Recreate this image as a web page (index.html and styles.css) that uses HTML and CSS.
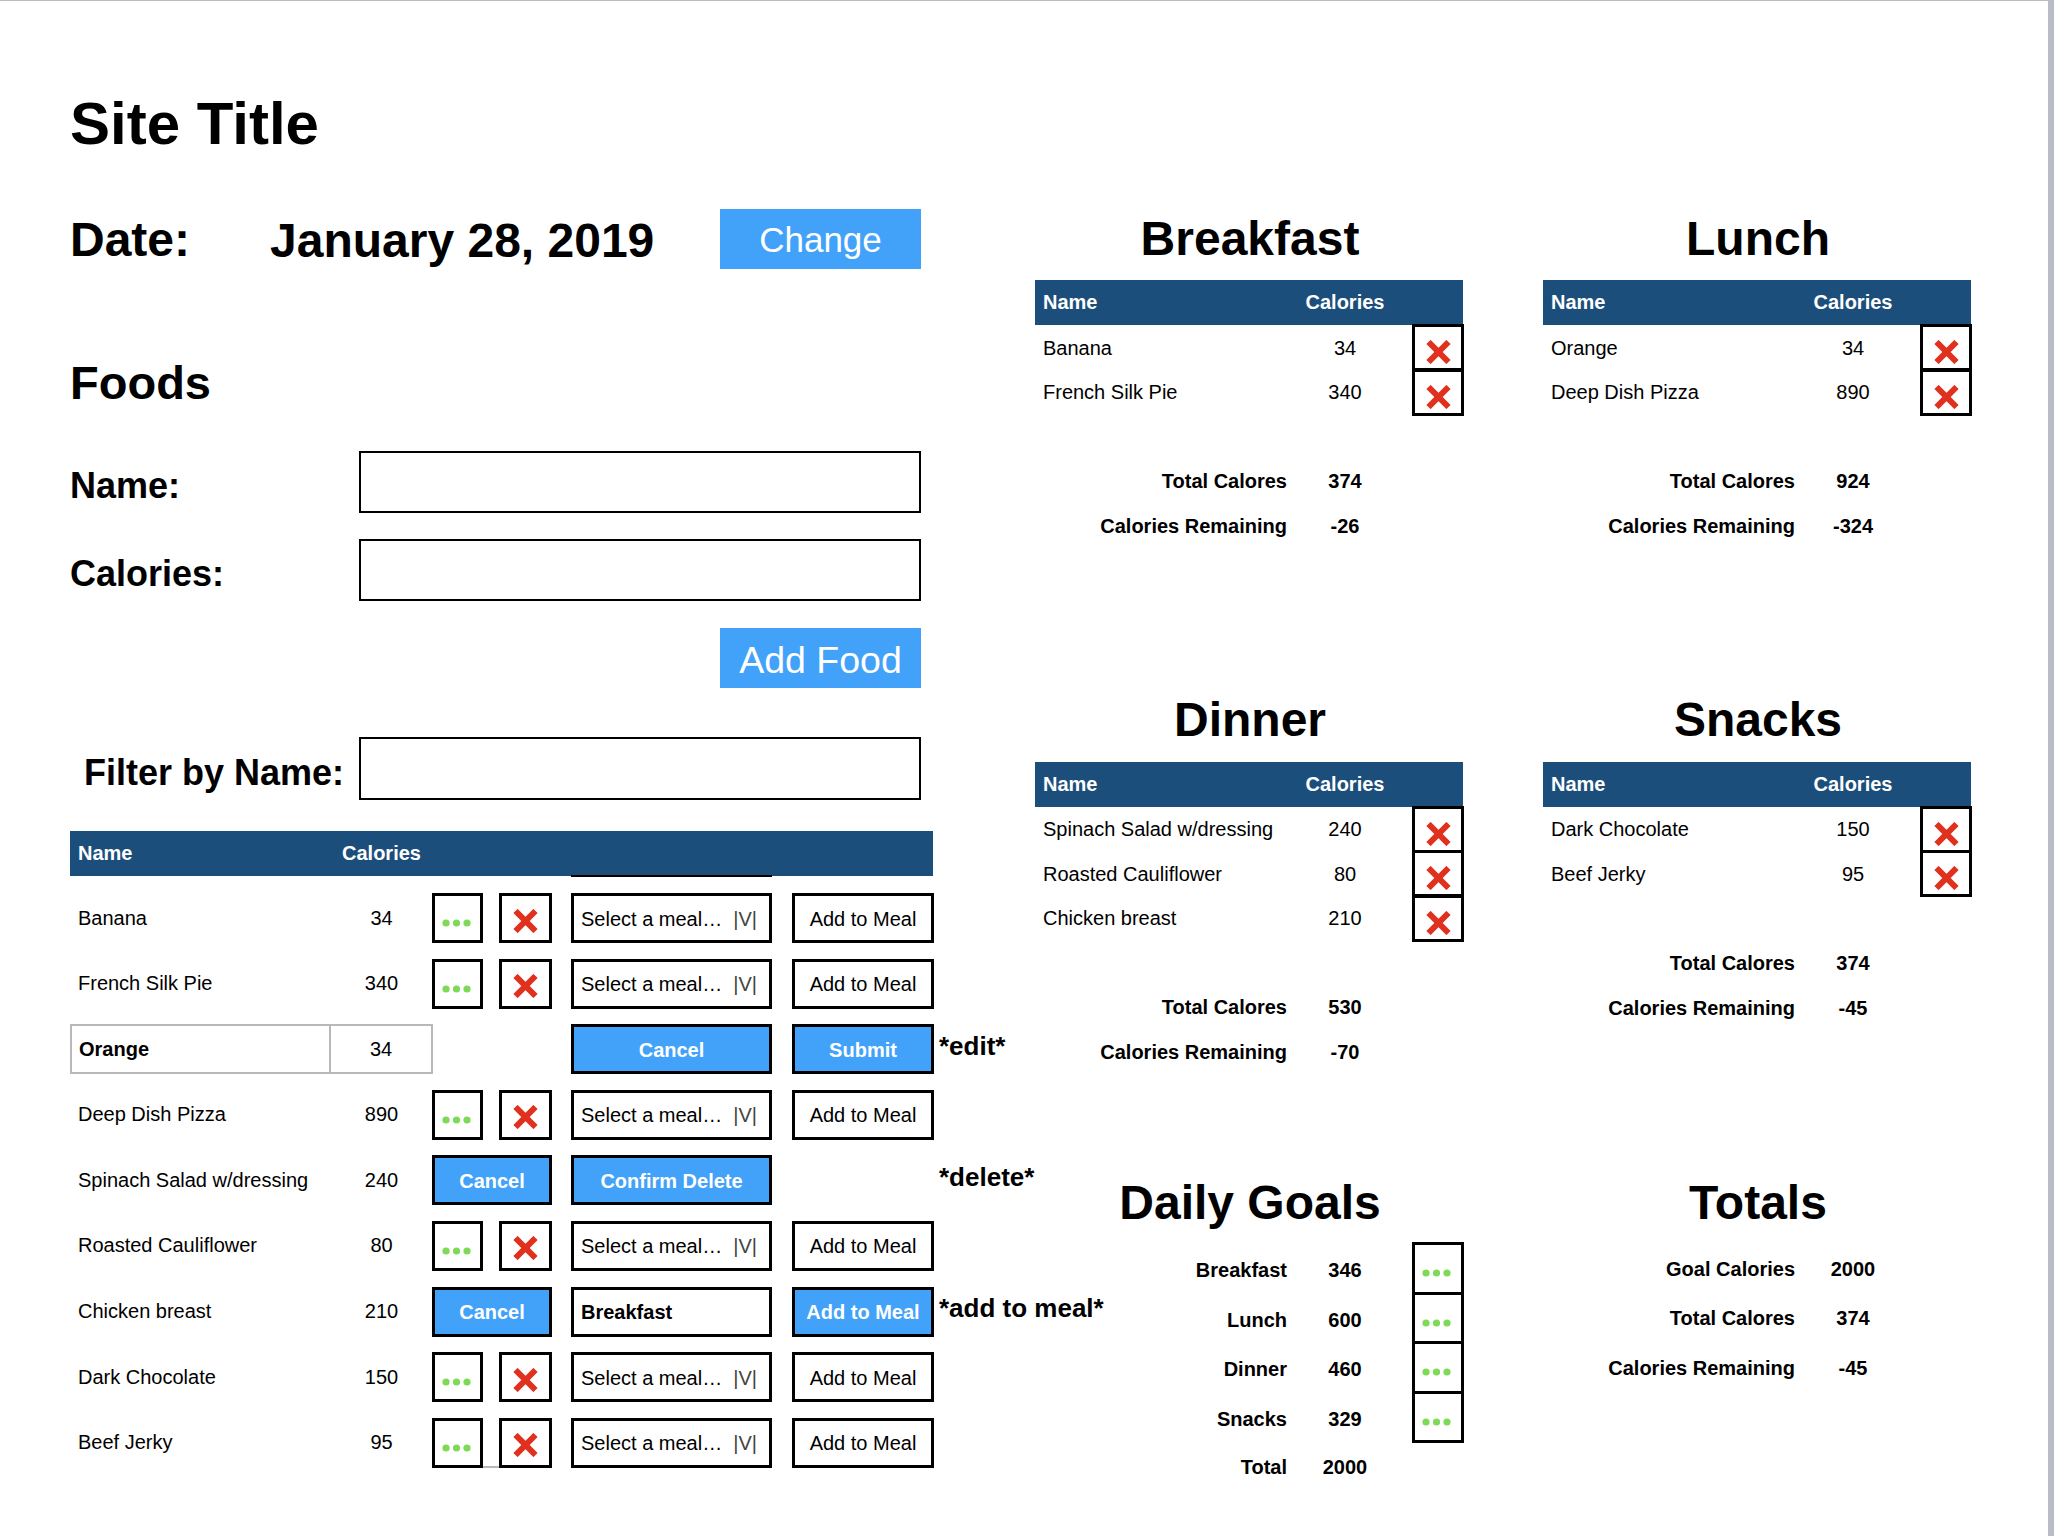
FILE: index.html
```html
<!DOCTYPE html>
<html lang="en">
<head>
  <meta charset="UTF-8">
  <title>Site Title</title>
  <link rel="stylesheet" href="styles.css">
</head>
<body>
<svg class="icon-defs" width="0" height="0" aria-hidden="true">
  <symbol id="dots" viewBox="0 0 32 8">
    <circle cx="4" cy="4" r="3.6"/>
    <circle cx="14.5" cy="4" r="3.6"/>
    <circle cx="25" cy="4" r="3.6"/>
  </symbol>
  <symbol id="cross" viewBox="0 0 25 24">
    <path d="M2.5 2 L22.5 22 M22.5 2 L2.5 22"/>
  </symbol>
</svg>
<div class="page">
  <div class="left">
    <h1>Site Title</h1>
    <div class="date-row">
      <span class="date-label">Date:</span>
      <span class="date-value">January 28, 2019</span>
      <button class="big-btn change-btn">Change</button>
    </div>
    <h2 class="foods-title">Foods</h2>
    <div class="field name-field">
      <label>Name:</label>
      <input type="text">
    </div>
    <div class="field calories-field">
      <label>Calories:</label>
      <input type="text">
    </div>
    <div class="add-row"><button class="big-btn add-btn">Add Food</button></div>
    <div class="field filter-field">
      <label>Filter by Name:</label>
      <input type="text">
    </div>

    <div class="foods-head">
      <span class="head-name">Name</span>
      <span class="cal">Calories</span>
      <span class="head-line"></span>
    </div>
    <div class="foods">
      <div class="food">
        <span class="name">Banana</span><span class="cal">34</span>
        <button class="box dots-box"><svg class="dots"><use href="#dots"/></svg></button>
        <button class="box x-box"><svg class="cross"><use href="#cross"/></svg></button>
        <div class="box select"><span>Select a meal…</span><span class="arrow">|V|</span></div>
        <button class="box add-meal">Add to Meal</button>
      </div>
      <div class="food">
        <span class="name">French Silk Pie</span><span class="cal">340</span>
        <button class="box dots-box"><svg class="dots"><use href="#dots"/></svg></button>
        <button class="box x-box"><svg class="cross"><use href="#cross"/></svg></button>
        <div class="box select"><span>Select a meal…</span><span class="arrow">|V|</span></div>
        <button class="box add-meal">Add to Meal</button>
      </div>
      <div class="food">
        <span class="name edit-name">Orange</span><span class="cal edit-cal">34</span>
        <button class="box blue select-col">Cancel</button>
        <button class="box blue add-meal">Submit</button>
        <span class="note">*edit*</span>
      </div>
      <div class="food">
        <span class="name">Deep Dish Pizza</span><span class="cal">890</span>
        <button class="box dots-box"><svg class="dots"><use href="#dots"/></svg></button>
        <button class="box x-box"><svg class="cross"><use href="#cross"/></svg></button>
        <div class="box select"><span>Select a meal…</span><span class="arrow">|V|</span></div>
        <button class="box add-meal">Add to Meal</button>
      </div>
      <div class="food">
        <span class="name">Spinach Salad w/dressing</span><span class="cal">240</span>
        <button class="box blue wide-cancel">Cancel</button>
        <button class="box blue select-col">Confirm Delete</button>
        <span class="note">*delete*</span>
      </div>
      <div class="food">
        <span class="name">Roasted Cauliflower</span><span class="cal">80</span>
        <button class="box dots-box"><svg class="dots"><use href="#dots"/></svg></button>
        <button class="box x-box"><svg class="cross"><use href="#cross"/></svg></button>
        <div class="box select"><span>Select a meal…</span><span class="arrow">|V|</span></div>
        <button class="box add-meal">Add to Meal</button>
      </div>
      <div class="food">
        <span class="name">Chicken breast</span><span class="cal">210</span>
        <button class="box blue wide-cancel">Cancel</button>
        <div class="box select chosen">Breakfast</div>
        <button class="box blue add-meal">Add to Meal</button>
        <span class="note">*add to meal*</span>
      </div>
      <div class="food">
        <span class="name">Dark Chocolate</span><span class="cal">150</span>
        <button class="box dots-box"><svg class="dots"><use href="#dots"/></svg></button>
        <button class="box x-box"><svg class="cross"><use href="#cross"/></svg></button>
        <div class="box select"><span>Select a meal…</span><span class="arrow">|V|</span></div>
        <button class="box add-meal">Add to Meal</button>
      </div>
      <div class="food">
        <span class="name">Beef Jerky</span><span class="cal">95</span>
        <button class="box dots-box"><svg class="dots"><use href="#dots"/></svg></button>
        <span class="gap-line"></span>
        <button class="box x-box"><svg class="cross"><use href="#cross"/></svg></button>
        <div class="box select"><span>Select a meal…</span><span class="arrow">|V|</span></div>
        <button class="box add-meal">Add to Meal</button>
      </div>
    </div>
  </div>

  <div class="right">
    <section class="card first">
      <h2>Breakfast</h2>
      <div class="meal-head"><span>Name</span><span class="val">Calories</span></div>
      <div class="meal-row"><span class="meal-name">Banana</span><span class="val">34</span><button class="box side-box"><svg class="cross"><use href="#cross"/></svg></button></div>
      <div class="meal-row"><span class="meal-name">French Silk Pie</span><span class="val">340</span><button class="box side-box"><svg class="cross"><use href="#cross"/></svg></button></div>
      <div class="sums">
        <div class="sum"><span class="sum-label">Total Calores</span><span class="val">374</span></div>
        <div class="sum"><span class="sum-label">Calories Remaining</span><span class="val">-26</span></div>
      </div>
    </section>
    <section class="card first">
      <h2>Lunch</h2>
      <div class="meal-head"><span>Name</span><span class="val">Calories</span></div>
      <div class="meal-row"><span class="meal-name">Orange</span><span class="val">34</span><button class="box side-box"><svg class="cross"><use href="#cross"/></svg></button></div>
      <div class="meal-row"><span class="meal-name">Deep Dish Pizza</span><span class="val">890</span><button class="box side-box"><svg class="cross"><use href="#cross"/></svg></button></div>
      <div class="sums">
        <div class="sum"><span class="sum-label">Total Calores</span><span class="val">924</span></div>
        <div class="sum"><span class="sum-label">Calories Remaining</span><span class="val">-324</span></div>
      </div>
    </section>
    <section class="card">
      <h2>Dinner</h2>
      <div class="meal-head"><span>Name</span><span class="val">Calories</span></div>
      <div class="meal-row"><span class="meal-name">Spinach Salad w/dressing</span><span class="val">240</span><button class="box side-box"><svg class="cross"><use href="#cross"/></svg></button></div>
      <div class="meal-row"><span class="meal-name">Roasted Cauliflower</span><span class="val">80</span><button class="box side-box"><svg class="cross"><use href="#cross"/></svg></button></div>
      <div class="meal-row"><span class="meal-name">Chicken breast</span><span class="val">210</span><button class="box side-box"><svg class="cross"><use href="#cross"/></svg></button></div>
      <div class="sums">
        <div class="sum"><span class="sum-label">Total Calores</span><span class="val">530</span></div>
        <div class="sum"><span class="sum-label">Calories Remaining</span><span class="val">-70</span></div>
      </div>
    </section>
    <section class="card">
      <h2>Snacks</h2>
      <div class="meal-head"><span>Name</span><span class="val">Calories</span></div>
      <div class="meal-row"><span class="meal-name">Dark Chocolate</span><span class="val">150</span><button class="box side-box"><svg class="cross"><use href="#cross"/></svg></button></div>
      <div class="meal-row"><span class="meal-name">Beef Jerky</span><span class="val">95</span><button class="box side-box"><svg class="cross"><use href="#cross"/></svg></button></div>
      <div class="sums">
        <div class="sum"><span class="sum-label">Total Calores</span><span class="val">374</span></div>
        <div class="sum"><span class="sum-label">Calories Remaining</span><span class="val">-45</span></div>
      </div>
    </section>
    <section class="card goals">
      <h2>Daily Goals</h2>
      <div class="sum"><span class="sum-label">Breakfast</span><span class="val">346</span><button class="box side-box"><svg class="dots"><use href="#dots"/></svg></button></div>
      <div class="sum"><span class="sum-label">Lunch</span><span class="val">600</span><button class="box side-box"><svg class="dots"><use href="#dots"/></svg></button></div>
      <div class="sum"><span class="sum-label">Dinner</span><span class="val">460</span><button class="box side-box"><svg class="dots"><use href="#dots"/></svg></button></div>
      <div class="sum"><span class="sum-label">Snacks</span><span class="val">329</span><button class="box side-box"><svg class="dots"><use href="#dots"/></svg></button></div>
      <div class="sum"><span class="sum-label">Total</span><span class="val">2000</span></div>
    </section>
    <section class="card goals">
      <h2>Totals</h2>
      <div class="sum"><span class="sum-label">Goal Calories</span><span class="val">2000</span></div>
      <div class="sum"><span class="sum-label">Total Calores</span><span class="val">374</span></div>
      <div class="sum"><span class="sum-label">Calories Remaining</span><span class="val">-45</span></div>
    </section>
  </div>
</div>
</body>
</html>
```

FILE: styles.css
```css
* {
	box-sizing: border-box;
}
html, body {
	margin: 0;
	height: 1536px;
	overflow: hidden;
}
body {
	background: #b9bcc4;
	font-family: "Liberation Sans", Arial, sans-serif;
	font-size: 20px;
	color: #000;
}
.icon-defs {
	display: block;
	height: 0;
}
button {
	font-family: inherit;
	padding: 0;
	margin: 0;
	border-radius: 0;
}

.page {
	width: 2048px;
	height: 1535px;
	margin-top: 1px;
	background: #fff;
	padding-left: 70px;
	display: grid;
	grid-template-columns: 965px 936px;
}

/* left column */
h1 {
	margin: 93px 0 0;
	font-size: 60px;
	line-height: 60px;
}
.date-row {
	display: flex;
	align-items: center;
	width: 851px;
	height: 60px;
	margin-top: 55px;
}
.date-label {
	width: 200px;
	font-size: 48px;
	font-weight: bold;
}
.date-value {
	flex: 1;
	font-size: 48px;
	font-weight: bold;
	padding-top: 2px;
}
.big-btn {
	width: 201px;
	height: 60px;
	padding-top: 2px;
	background: #42a2f9;
	color: #fff;
	border: 0;
}
.change-btn {
	font-size: 35px;
}
.add-btn {
	font-size: 37.5px;
	padding-top: 4px;
}
.foods-title {
	margin: 90px 0 0;
	font-size: 47px;
	line-height: 48px;
}
.field {
	display: grid;
	grid-template-columns: 289px 562px;
	align-items: center;
}
.field label {
	font-size: 36px;
	font-weight: bold;
	padding-top: 8px;
}
.field input {
	height: 62px;
	border: 2px solid #000;
	background: #fff;
}
.name-field {
	margin-top: 44px;
}
.calories-field {
	margin-top: 26px;
}
.add-row {
	width: 851px;
	margin-top: 27px;
	display: flex;
	justify-content: flex-end;
}
.filter-field {
	margin-top: 49px;
}
.filter-field label {
	padding-left: 14px;
}
.filter-field input {
	height: 63px;
}

.foods-head {
	display: grid;
	grid-template-columns: 261px 101px 139px 201px;
	width: 863px;
	height: 45px;
	margin-top: 31px;
	background: #1c4e7c;
	color: #fff;
	font-weight: bold;
	align-items: center;
}
.foods-head .cal {
	text-align: center;
}
.head-name {
	padding-left: 8px;
}
.head-line {
	grid-column: 4;
	align-self: end;
	height: 2px;
	margin-bottom: -1px;
	background: #000;
}
.foods {
	margin-top: 17px;
	display: grid;
	row-gap: 15.6px;
}
.food {
	display: grid;
	grid-template-columns: 261px 101px 51px 16px 53px 19px 201px 20px 142px 5px 180px;
	height: 50px;
	align-items: center;
}
.name {
	grid-column: 1;
	padding-left: 8px;
}
.cal {
	grid-column: 2;
	text-align: center;
}
.edit-name, .edit-cal {
	height: 50px;
	line-height: 46px;
	border: 2px solid #b8b8b8;
	background: #fff;
}
.edit-name {
	font-weight: bold;
	padding-left: 7px;
}
.edit-cal {
	border-left: 0;
	margin-right: -1px;
}
.box {
	height: 50px;
	border: 3px solid #000;
	background: #fff;
	font-size: 20px;
	color: #000;
	display: flex;
	align-items: center;
	justify-content: center;
}
.dots-box {
	grid-column: 3;
}
.x-box {
	grid-column: 5;
}
.gap-line {
	grid-column: 4;
	align-self: end;
	height: 2px;
	background: #b8b8b8;
}
.select {
	grid-column: 7;
	justify-content: space-between;
	padding: 2px 12px 0 7px;
}
.select-col {
	grid-column: 7;
}
.wide-cancel {
	grid-column: 3 / 6;
}
.arrow {
	color: #444;
	font-weight: 300;
}
.chosen {
	font-weight: bold;
}
.add-meal {
	grid-column: 9;
	padding-top: 2px;
}
.blue {
	background: #42a2f9;
	color: #fff;
	font-weight: bold;
	padding-top: 2px;
}
.note {
	grid-column: 11;
	font-size: 26px;
	font-weight: bold;
	white-space: nowrap;
	margin-top: -6px;
}
svg.dots {
	width: 32px;
	height: 8px;
	fill: #7ed957;
	margin-top: 10px;
}
svg.cross {
	width: 25px;
	height: 24px;
	fill: none;
	stroke: #e0301e;
	stroke-width: 6;
	margin-top: 5px;
}

/* right column */
.right {
	display: grid;
	grid-template-columns: 428px 428px;
	column-gap: 80px;
	grid-template-rows: 481.5px 483.5px auto;
	padding-top: 207px;
}
.card h2 {
	margin: 0 0 12px;
	padding-left: 2px;
	font-size: 48px;
	line-height: 60px;
	text-align: center;
}
.first h2 {
	margin-bottom: 11px;
	padding-top: 1px;
}
.meal-head, .meal-row {
	display: grid;
	grid-template-columns: 260px 100px 17px 52px;
	align-items: center;
	height: 44.5px;
	width: 429px;
}
.meal-head {
	height: 45px;
	width: 428px;
	background: #1c4e7c;
	color: #fff;
	font-weight: bold;
	padding-left: 8px;
	grid-template-columns: 252px 100px;
}
.meal-name {
	padding-left: 8px;
	white-space: nowrap;
}
.val {
	text-align: center;
}
.side-box {
	grid-column: 4;
	height: 47px;
	margin-top: -1px;
}
.side-box svg.cross {
	margin-top: 9px;
}
.meal-row .side-box {
	align-self: start;
}
.sums {
	margin-top: 45px;
}
.sum {
	display: grid;
	grid-template-columns: 260px 100px 17px 52px;
	align-items: center;
	height: 45px;
	width: 429px;
	font-weight: bold;
}
.sum-label {
	text-align: right;
	padding-right: 8px;
}
.goals h2 {
	margin-bottom: 9px;
}
.goals .sum {
	height: 49.6px;
}
.goals .sum-label, .goals .val {
	padding-top: 5px;
}
.goals .side-box {
	height: 52.6px;
	margin-top: 0;
	align-self: start;
	font-weight: normal;
}
```
